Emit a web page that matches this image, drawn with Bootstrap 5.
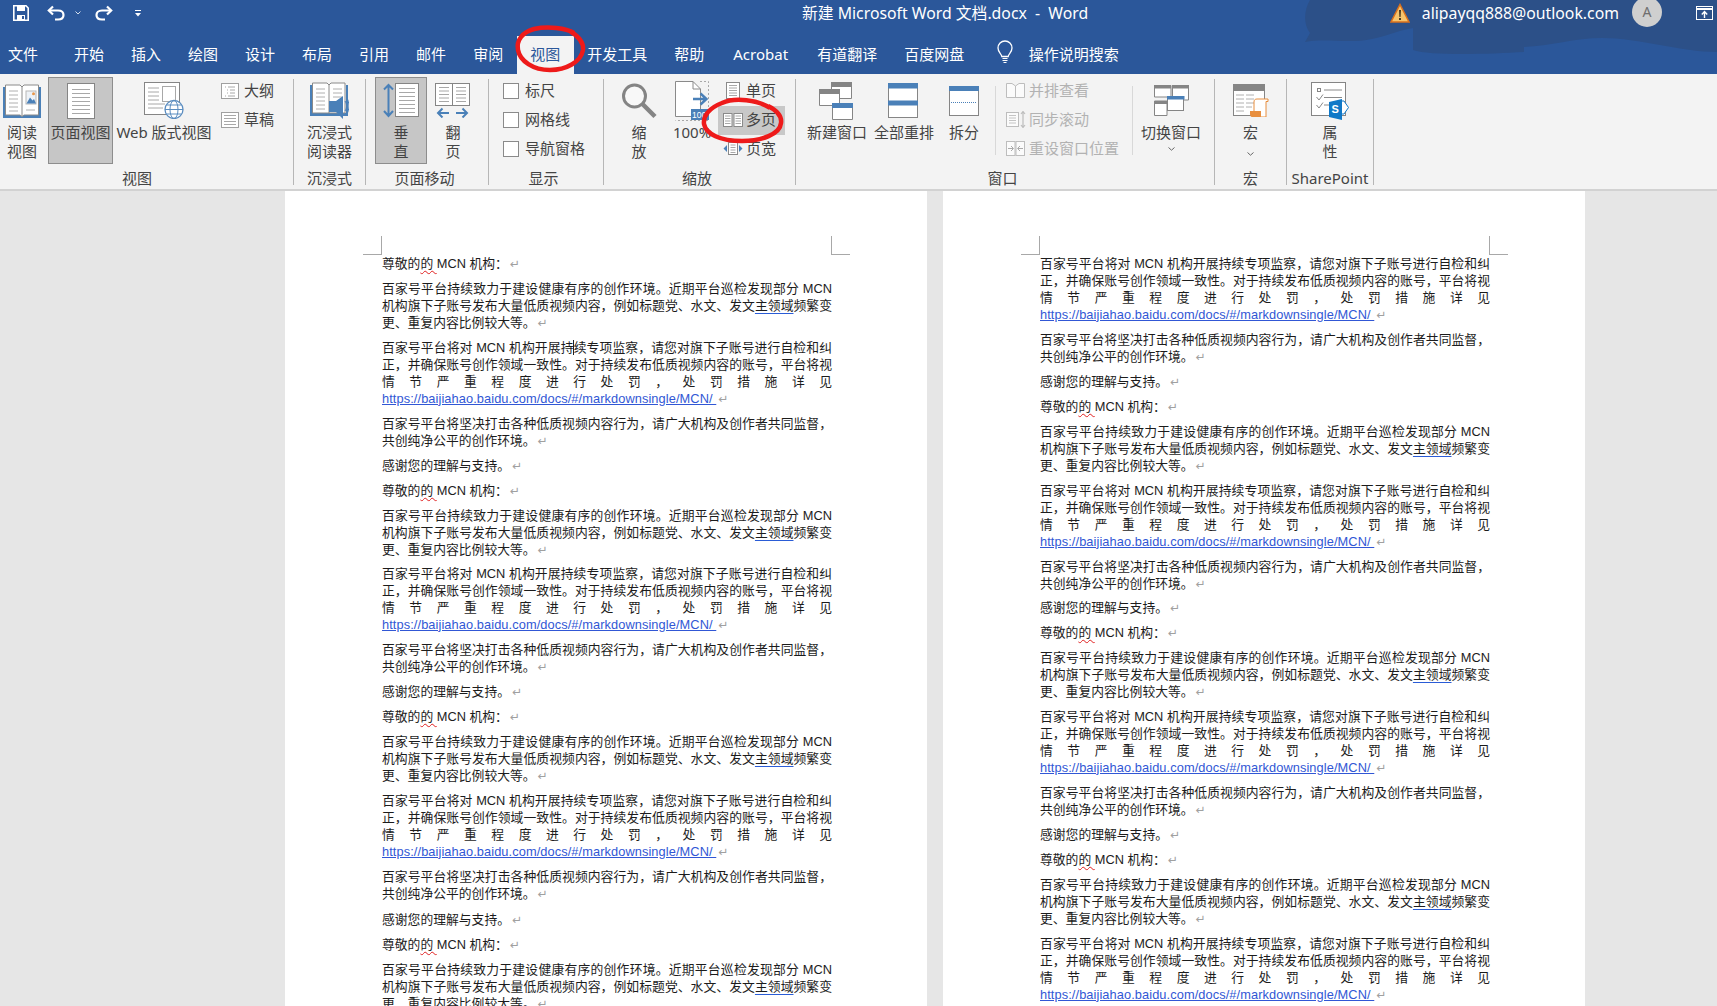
<!DOCTYPE html>
<html lang="zh-CN">
<head>
<meta charset="utf-8">
<title>新建 Microsoft Word 文档.docx - Word</title>
<link href="https://cdn.jsdelivr.net/npm/bootstrap@5.3.0/dist/css/bootstrap.min.css" rel="stylesheet">
<style>
html,body{height:100%;margin:0;overflow:hidden}
body{font-family:"Noto Sans","Noto Sans CJK SC",sans-serif;background:#e6e6e6;color:#444;position:relative}
.w-top{background:#2b579a;color:#fff;height:74px;position:relative;overflow:hidden}
.w-cloud{position:absolute;right:0;top:0;width:467px;height:74px}
.w-titlerow{height:36px;position:relative;font-size:15.8px}
.w-qat{width:802px;padding-left:13px;height:26px}
.w-qat svg{display:block}
.w-title{line-height:26px;white-space:pre}
.w-acct{margin-left:auto;height:26px}
.w-email{font-size:15.8px;line-height:23px;margin-left:12px;margin-right:13px}
.w-avatar{width:30px;height:30px;border-radius:50%;background:#cfcfcf;color:#6e6e6e;font-size:14px;line-height:30px;text-align:center;margin-top:-3px;margin-right:34px;flex:none}
.w-tabs{height:38px;position:relative;font-size:15px}
.w-tab{padding:0 13.5px;line-height:36px;height:38px;color:#fff;white-space:nowrap}
.w-tab.first{padding:0 22.5px 0 8px}
.w-tab.acro{width:86px;padding:0;text-align:center}
.w-tab.now{background:#f3f3f3;color:#2b579a}
.w-tell{margin-left:17px}
.w-ribbon{height:117px;background:#f3f3f3;border-bottom:2px solid #d2d2d2;font-size:15px;line-height:19px;color:#444}
.rg{flex:none;padding-top:3px;height:115px;display:flex;flex-direction:column}
.rg-body{height:90px;display:flex;align-items:flex-start}
.rg-name{text-align:center;line-height:22px;height:22px;font-size:15px;white-space:nowrap}
.rsep{flex:none;width:1px;background:#b6b6b6;margin:5px 0 4px}
.rsep-soft{flex:none;width:1px;height:69px;background:#d8d8d8;margin-top:9px}
.rb{flex:none;height:87px;text-align:center;border:1px solid transparent;white-space:nowrap}
.rb.on{background:#c6c6c6;border-color:#8d8d8d}
.rb-ico{height:45px;display:flex;align-items:center;justify-content:center}
.rb-ico svg{display:block;flex:none}
.rs-col{flex:none}
.rs{height:29px;padding-bottom:2px;display:flex;align-items:center;white-space:nowrap}
.rs.hot{background:#c8c8c8}
.rs.off{color:#b2b2b2}
.rs svg{display:block;flex:none}
.rs-box{flex:none;width:16px;height:16px;margin:0 6px 0 0;border-radius:0!important;border:1px solid #8a8a8a;background-color:#fff}
.rb-chev{display:block;margin:5px auto 0}
.gw-read{width:293px}.gw-imm,.gw-mac{width:71px}.gw-move{width:122px}.gw-show{width:114px;padding-left:14px}.gw-zoom{width:191px}.gw-win{width:418px}.gw-sp{width:86px}
.p-r19{padding-right:19px}.p-r5{padding-right:5px}
.bw-44{width:44px}.bw-65{width:65px}.bw-98{width:98px}.bw-52{width:52px}.bw-40{width:40px}.bw-48{width:48px}.bw-60{width:60px}.bw-32{width:32px}.bw-62{width:62px}
.ml-2px{margin-left:2px}.ml-4px{margin-left:4px}.ml-8px{margin-left:8px}.ml-9px{margin-left:9px}.ml-15px{margin-left:15px}.ml-8a{margin-left:7px}.ml-15a{margin-left:15px}
.w-doc{height:815px;overflow:hidden;padding-left:285px;gap:16px}
.w-page{flex:none;width:642px;height:900px;background:#fff;position:relative;padding:63.5px 95px 0 97px;font-family:"Liberation Sans","Noto Sans CJK SC",sans-serif;font-size:12.8px;line-height:17px;color:#1c1c1c}
.crop{position:absolute;top:45px;width:19px;height:19px;border-bottom:1px solid #a8a8a8}
.crop.l{left:78px;border-right:1px solid #a8a8a8}
.crop.r{right:77px;border-left:1px solid #a8a8a8}
.doc-para{margin:0 0 8px}
.doc-para.tight{margin-bottom:7px}
.doc-para.loose{margin-bottom:9px}
.doc-line{display:block;height:17px;white-space:nowrap}
.doc-line.fit{text-align:justify;text-align-last:justify}
.doc-wavy{text-decoration:underline wavy #e02020 1px;text-underline-offset:2px}
.doc-blue{text-decoration:underline #2a5cd6 1px;text-underline-offset:3px}
.doc-caret{border-left:1px solid #222;margin-left:-1px}
.doc-link{color:#3157d5;letter-spacing:.09px}
.doc-mark{color:#a0a0a0;font-family:"DejaVu Sans",sans-serif;font-size:12px;margin-left:2px}
.w-marks{position:absolute;left:0;top:0;pointer-events:none}
</style>
</head>
<body>
<header class="w-top">
<svg class="w-cloud" viewBox="0 0 467 74" aria-hidden="true"><path d="M60 0C54 10 53 24 60 33L55 42C75 38 100 44 122 39C140 35 150 30 163 28L163 50C180 56 240 54 274 52L274 47C300 46 325 38 352 38C390 38 430 52 467 52V0Z" fill="#2c5088"/></svg>
<div class="w-titlerow d-flex">
<div class="w-qat d-flex align-items-center">
<svg width="16" height="16" viewBox="0 0 16 16"><path d="M.8.8H13L15.2 3V15.2H.8Z" fill="none" stroke="#fff" stroke-width="1.6"/><path d="M4 1h8v5H4zM4 10h8v5H4z" fill="#fff"/><path d="M9 11h2v3H9z" fill="#2b579a"/></svg>
<svg style="margin-left:18px" width="18" height="16" viewBox="0 0 18 16"><path d="M6 1.5 1.8 5.5 6 9.5" fill="none" stroke="#fff" stroke-width="2.2"/><path d="M2 5.5H11C14.5 5.5 16.5 7.5 16.5 10S14.5 14.5 11 14.5H8" fill="none" stroke="#fff" stroke-width="2.2"/></svg>
<svg style="margin-left:10px" width="6" height="4" viewBox="0 0 6 4"><path d="M.5.5 3 3 5.500.5" fill="none" stroke="#d5deeb" stroke-width="1"/></svg>
<svg style="margin-left:14px" width="18" height="16" viewBox="0 0 18 16"><path d="M12 1.500 16.200 5.500 12 9.500" fill="none" stroke="#fff" stroke-width="2.200"/><path d="M16 5.500H7C3.500 5.500 1.500 7.500 1.500 10S3.500 14.500 7 14.500H10" fill="none" stroke="#fff" stroke-width="2.200"/></svg>
<svg style="margin-left:22px" width="6" height="7" viewBox="0 0 6 7"><path d="M0 .5H6" stroke="#fff"/><path d="M0 3H6L3 6.500Z" fill="#fff"/></svg>
</div>
<div class="w-title">新建 Microsoft Word 文档.docx  -  Word</div>
<div class="w-acct d-flex align-items-center">
<svg width="20" height="20" viewBox="0 0 20 20"><path d="M10 1.500 19 19H1Z" fill="#f7c46c" stroke="#d9701c" stroke-width="1.500"/><path d="M9 7h2l-.4 7H9.400ZM9 15h2v2H9Z" fill="#4a3a20"/></svg>
<div class="w-email">alipayqq888@outlook.com</div>
<div class="w-avatar">A</div>
<svg class="me-1" width="17" height="14" viewBox="0 0 17 14"><rect x=".5" y=".5" width="16" height="13" fill="none" stroke="#fff"/><path d="M.5 3H16.500" stroke="#fff" stroke-width="2"/><path d="M8.500 12V6M5.800 8.500 8.500 5.500 11.200 8.500" fill="none" stroke="#fff" stroke-width="1.400"/></svg>
</div>
</div>
<nav class="w-tabs d-flex">
<div class="w-tab first">文件</div><div class="w-tab">开始</div><div class="w-tab">插入</div><div class="w-tab">绘图</div><div class="w-tab">设计</div><div class="w-tab">布局</div><div class="w-tab">引用</div><div class="w-tab">邮件</div><div class="w-tab">审阅</div><div class="w-tab now">视图</div><div class="w-tab">开发工具</div><div class="w-tab">帮助</div><div class="w-tab acro">Acrobat</div><div class="w-tab">有道翻译</div><div class="w-tab">百度网盘</div>
<div class="w-tell d-flex align-items-start">
<svg class="mt-1" style="margin-right:14px;margin-left:0" width="20" height="24" viewBox="0 0 20 24"><path d="M6.800 16.500C6.500 13.500 3 12.500 3 8A7 7 0 0 1 17 8C17 12.500 13.500 13.500 13.200 16.500Z" fill="none" stroke="#fff" stroke-width="1.300"/><path d="M7.500 18.500H12.500M7.500 20.500H12.500M8.500 22.500H11.500" stroke="#fff" stroke-width="1.200"/></svg>
<div class="w-tab p-0">操作说明搜索</div>
</div>
</nav>
</header>

<section class="w-ribbon d-flex">
<div class="rg gw-read">
<div class="rg-body">
<div class="rb bw-44"><div class="rb-ico"><svg width="38" height="34" viewBox="0 0 38 34"><path d="M0 3H3V31H35V3H38V34H0Z" fill="#4a80b8"/><path d="M2.500 1H17L19 3 21 1H35.500V31H21L19 32.500 17 31H2.500Z" fill="#fff" stroke="#8a8a8a"/><path d="M19 3V32" stroke="#8a8a8a"/><path d="M6 7H15M6 11H15M6 15H15M6 19H15M6 23H15M6 27H15M23 26H32" stroke="#b0b0b0"/><rect x="23" y="7" width="10" height="13" fill="#eef2f7" stroke="#b8b8b8"/><circle cx="30.500" cy="9.800" r="1.500" fill="#e8974b"/><path d="M23.500 19.500 27 13.500 29.500 16.500 31 15 33 19.500Z" fill="#4a80b8"/></svg></div><div>阅读<br>视图</div></div>
<div class="rb bw-65 on ml-4px"><div class="rb-ico"><svg width="28" height="36" viewBox="0 0 28 36"><rect x=".5" y=".5" width="27" height="35" fill="#fff" stroke="#858585"/><path d="M5 6.500H23M5 10.500H23M5 14.500H23M5 18.500H23M5 22.500H23M5 26.500H23M5 30.500H23" stroke="#a8a8a8"/></svg></div><div>页面视图</div></div>
<div class="rb bw-98 ml-2px"><div class="rb-ico"><svg width="40" height="37" viewBox="0 0 40 37"><rect x=".5" y=".5" width="35" height="32" fill="#fff" stroke="#858585"/><path d="M4 6H15M4 10H15M4 14H15M4 18H15M4 22H21M4 26H19" stroke="#a8a8a8"/><rect x="18.500" y="4.500" width="13" height="15" fill="#fff" stroke="#a8a8a8"/><circle cx="30" cy="27.500" r="9" fill="#fff" stroke="#5b8dc0" stroke-width="1.300"/><ellipse cx="30" cy="27.500" rx="4" ry="9" fill="none" stroke="#5b8dc0"/><path d="M21 27.500H39M22.500 23H37.500M22.500 32H37.500" stroke="#5b8dc0"/></svg></div><div>Web 版式视图</div></div>
<div class="rs-col ml-8px">
<div class="rs"><svg style="margin-right:5px" width="18" height="16" viewBox="0 0 18 16"><rect x=".5" y=".5" width="17" height="15" fill="#fff" stroke="#a0a0a0"/><path d="M4 4H5M7 4H14M6 7H7M9 7H14M6 10H7M9 10H14M4 13H5M7 13H14" stroke="#a8a8a8"/></svg>大纲</div>
<div class="rs"><svg style="margin-right:5px" width="18" height="16" viewBox="0 0 18 16"><rect x=".5" y=".5" width="17" height="15" fill="#fff" stroke="#a0a0a0"/><path d="M3 3.500H15M3 6.500H15M3 9.500H15M3 12.500H15" stroke="#a8a8a8"/></svg>草稿</div>
</div>
</div>
<div class="rg-name p-r19">视图</div>
</div>
<div class="rsep"></div>
<div class="rg gw-imm">
<div class="rg-body justify-content-center">
<div class="rb bw-52"><div class="rb-ico"><svg width="39" height="37" viewBox="0 0 39 37"><path d="M0 3H3V31H36V3H38V34H0Z" fill="#4a80b8"/><path d="M2.500 1H17L19 3 21 1H35V31H2.500Z" fill="#fff" stroke="#8a8a8a"/><path d="M19 3V31" stroke="#8a8a8a"/><path d="M6 7H15M6 11H15M6 15H15M6 19H15M6 23H15M6 27H15M23 7H32M23 11H32M23 15H32" stroke="#b0b0b0"/><path d="M19 19H26L33 14V37L26 30H19Z" fill="#4a80b8"/><path d="M35 19C37 22 37 26 35 29M37 16C39.500 21 39.500 27 37 32" fill="none" stroke="#4a80b8"/></svg></div><div>沉浸式<br>阅读器</div></div>
</div>
<div class="rg-name">沉浸式</div>
</div>
<div class="rsep"></div>
<div class="rg gw-move">
<div class="rg-body" style="padding-left:9px">
<div class="rb bw-52 on"><div class="rb-ico"><svg width="36" height="35" viewBox="0 0 36 35"><rect x="12.500" y=".5" width="23" height="33" fill="#fff" stroke="#858585"/><path d="M16 5.500H32M16 9.500H32M16 13.500H32M16 17.500H32M16 21.500H32M16 25.500H32M16 29.500H32" stroke="#a8a8a8"/><path d="M5.500 2V32M1 6.500 5.500 2 10 6.500M1 28 5.500 33 10 28" fill="none" stroke="#4a80b8" stroke-width="2"/></svg></div><div>垂<br>直</div></div>
<div class="rb bw-52"><div class="rb-ico"><svg width="36" height="35" viewBox="0 0 36 35"><rect x=".5" y=".5" width="17" height="22" fill="#fff" stroke="#858585"/><rect x="17.500" y=".5" width="17" height="22" fill="#fff" stroke="#858585"/><path d="M4 4.500H14M4 8H14M4 11.500H14M4 15H14M4 18.500H14M21 4.500H31M21 8H31M21 11.500H31M21 15H31M21 18.500H31" stroke="#a8a8a8"/><path d="M3 30H14M7.500 25.500 3 30 7.500 34.500M21 30H32M27.500 25.500 32 30 27.500 34.500" fill="none" stroke="#4a80b8" stroke-width="2"/></svg></div><div>翻<br>页</div></div>
</div>
<div class="rg-name p-r5">页面移动</div>
</div>
<div class="rsep"></div>
<div class="rg gw-show">
<div class="rg-body">
<div class="rs-col">
<div class="rs"><input class="form-check-input rs-box" type="checkbox" aria-label="标尺">标尺</div>
<div class="rs"><input class="form-check-input rs-box" type="checkbox" aria-label="网格线">网格线</div>
<div class="rs"><input class="form-check-input rs-box" type="checkbox" aria-label="导航窗格">导航窗格</div>
</div>
</div>
<div class="rg-name p-r19">显示</div>
</div>
<div class="rsep"></div>
<div class="rg gw-zoom">
<div class="rg-body" style="padding-left:15px">
<div class="rb bw-40"><div class="rb-ico"><svg width="36" height="36" viewBox="0 0 36 36"><circle cx="13.500" cy="13" r="11" fill="#f8f8f8" stroke="#848484" stroke-width="3"/><path d="M21.500 21 34 33.500" stroke="#848484" stroke-width="4.500"/></svg></div><div>缩<br>放</div></div>
<div class="rb bw-48 ml-9px"><div class="rb-ico"><svg width="34" height="40" viewBox="0 0 34 40"><path d="M25 .5H33.500V39.500H.5" fill="none" stroke="#a8a8a8" stroke-dasharray="2 2"/><path d="M.5 .5H18L25.500 8V35.500H.5Z" fill="#fff" stroke="#8a8a8a"/><path d="M18 .5V8H25.500" fill="none" stroke="#8a8a8a"/><path d="M18 18H31M25.500 12.500 31.500 18 25.500 23.500" fill="none" stroke="#4a80b8" stroke-width="2.400"/><rect x="16" y="28" width="18" height="11" fill="#4a80b8"/><text x="17" y="37" fill="#fff" font-size="8.500" font-family="Liberation Sans">100</text></svg></div><div>100%</div></div>
<div class="rs-col ml-2px" style="width:67px">
<div class="rs"><svg style="margin:0 6px 0 8px" width="14" height="17" viewBox="0 0 14 17"><rect x=".5" y=".5" width="13" height="16" fill="#fff" stroke="#8a8a8a"/><path d="M3 3.500H11M3 6H11M3 8.500H11M3 11H11M3 13.500H11" stroke="#a8a8a8"/></svg>单页</div>
<div class="rs hot"><svg style="margin:0 3px 0 5px" width="20" height="14" viewBox="0 0 20 14"><rect x=".5" y=".5" width="8.500" height="13" fill="#fff" stroke="#8a8a8a"/><rect x="11" y=".5" width="8.500" height="13" fill="#fff" stroke="#8a8a8a"/><path d="M2 3H7.500M2 5.500H7.500M2 8H7.500M2 10.500H7.500M12.500 3H18M12.500 5.500H18M12.500 8H18M12.500 10.500H18" stroke="#a8a8a8"/></svg>多页</div>
<div class="rs"><svg style="margin:0 3px 0 5px" width="20" height="13" viewBox="0 0 20 13"><rect x="5.500" y=".5" width="9" height="12" fill="#fff" stroke="#8a8a8a"/><path d="M7.500 3H12.500M7.500 5.500H12.500M7.500 8H12.500M7.500 10.500H12.500" stroke="#a8a8a8"/><path d="M4 3 .5 6.500 4 10ZM16 3 19.500 6.500 16 10Z" fill="#4a80b8"/></svg>页宽</div>
</div>
</div>
<div class="rg-name p-r5">缩放</div>
</div>
<div class="rsep"></div>
<div class="rg gw-win">
<div class="rg-body" style="padding-left:10px">
<div class="rb bw-60"><div class="rb-ico"><svg width="34" height="38" viewBox="0 0 34 38"><path d="M12.500.5H32.500V16.500H12.500Z" fill="#fff" stroke="#858585"/><rect x="12" width="21" height="5" fill="#858585"/><path d="M.5 7.500H20.500V23.500H.5Z" fill="#fff" stroke="#858585"/><rect width="21" height="5" y="7" fill="#858585"/><path d="M13.500 21.500H33.500V37.500H13.500Z" fill="#fff" stroke="#858585"/><rect x="13" y="21" width="21" height="5" fill="#4a80b8"/></svg></div><div>新建窗口</div></div>
<div class="rb bw-60 ml-8a"><div class="rb-ico"><svg width="30" height="35" viewBox="0 0 30 35"><rect x=".5" y=".5" width="29" height="34" fill="#fff" stroke="#858585"/><rect width="30" height="5.500" fill="#4a80b8"/><rect y="17.500" width="30" height="5" fill="#4a80b8"/></svg></div><div>全部重排</div></div>
<div class="rb bw-32 ml-15a"><div class="rb-ico"><svg width="30" height="30" viewBox="0 0 30 30"><rect x=".5" y=".5" width="29" height="29" fill="#fff" stroke="#858585"/><rect width="30" height="5" fill="#4a80b8"/><path d="M2 16.500H28" stroke="#4a80b8" stroke-dasharray="1 1"/></svg></div><div>拆分</div></div>
<div class="rsep-soft ml-15px"></div>
<div class="rs-col ml-9px" style="width:127px">
<div class="rs off"><svg style="margin:0 4px 0 1px" width="19" height="15" viewBox="0 0 19 15"><path d="M.5 .5H6L9.500 3 13 .5H18.500V14.500H.5Z" fill="#fbfbfb" stroke="#bdbdbd"/><path d="M9.500 3V14.500" stroke="#bdbdbd"/></svg>并排查看</div>
<div class="rs off"><svg style="margin:0 3px 0 1px" width="20" height="17" viewBox="0 0 20 17"><rect x=".5" y="1.500" width="12" height="14" fill="#fbfbfb" stroke="#bdbdbd"/><path d="M3 4.500H10M3 7H10M3 9.500H10M3 12H10" stroke="#c4c4c4"/><path d="M17 .5V16.500M15 3 17 .5 19 3M15 14 17 16.500 19 14" fill="none" stroke="#bdbdbd" stroke-width="1.200"/></svg>同步滚动</div>
<div class="rs off"><svg style="margin:0 4px 0 1px" width="19" height="15" viewBox="0 0 19 15"><rect x=".5" y=".5" width="8.500" height="14" fill="#fbfbfb" stroke="#bdbdbd"/><rect x="10" y=".5" width="8.500" height="14" fill="#fbfbfb" stroke="#bdbdbd"/><path d="M2 7.500H7M5 5 7.500 7.500 5 10M17 7.500H12M14 5 11.500 7.500 14 10" fill="none" stroke="#aaa"/></svg>重设窗口位置</div>
</div>
<div class="rsep-soft"></div>
<div class="rb bw-62 ml-8a"><div class="rb-ico"><svg width="35" height="31" viewBox="0 0 35 31"><path d="M.5 .5H17V12H.5ZM18.500 .5H34.500V15H18.500ZM.5 16H13V30.500H.5Z" fill="#fff" stroke="#858585"/><rect width="17" height="3.500" fill="#858585"/><rect x="18" width="17" height="3.500" fill="#858585"/><rect y="16" width="13" height="3" fill="#858585"/><rect x="13.500" y="11.500" width="16" height="14" fill="#fff" stroke="#858585"/><rect x="13" y="11" width="17.500" height="3.500" fill="#4a80b8"/></svg></div><div>切换窗口</div><svg class="rb-chev" width="7" height="4" viewBox="0 0 7 4"><path d="M.5.5 3.500 3.200 6.500.5" fill="none" stroke="#666"/></svg></div>
</div>
<div class="rg-name p-r5">窗口</div>
</div>
<div class="rsep"></div>
<div class="rg gw-mac">
<div class="rg-body justify-content-center">
<div class="rb bw-52"><div class="rb-ico"><svg width="36" height="33" viewBox="0 0 36 33"><rect x=".5" y=".5" width="31" height="31" fill="#fff" stroke="#858585"/><rect width="32" height="7" fill="#858585"/><path d="M3 11H11M13 11H21M3 15H11M13 15H21M3 19H11M13 19H21M3 23H11M13 23H19M3 27H11" stroke="#b0b0b0"/><path d="M21 18C21 16 22 15 24 15H35V17.500H33V33H22V29H21Z" fill="#fff" stroke="#e88e3e"/><path d="M17 27H28V33H19C17.500 33 17 31.500 17 30Z" fill="#e88e3e"/></svg></div><div>宏</div><svg class="rb-chev" style="margin-top:10px" width="7" height="4" viewBox="0 0 7 4"><path d="M.5.5 3.500 3.200 6.500.5" fill="none" stroke="#666"/></svg></div>
</div>
<div class="rg-name">宏</div>
</div>
<div class="rsep"></div>
<div class="rg gw-sp">
<div class="rg-body justify-content-center">
<div class="rb bw-52"><div class="rb-ico"><svg width="38" height="38" viewBox="0 0 38 38"><rect x=".5" y=".5" width="34" height="33" fill="#fff" stroke="#858585"/><rect x="6.500" y="6.500" width="3" height="3" fill="#fff" stroke="#858585"/><path d="M13 8H31M13 15.500H31M13 23H20" stroke="#8a8a8a"/><path d="M5.500 15 8 18 12 12.500M5.500 23 8 26 12 20.500" fill="none" stroke="#8a8a8a"/><path d="M18 20 31 17V38L18 35Z" fill="#0f78c7"/><path d="M31 19H33L37.500 25.500 33 32H31" fill="#fff" stroke="#0f78c7"/><text x="20.500" y="31" fill="#fff" font-size="11" font-weight="700" font-family="Liberation Sans">S</text></svg></div><div>属<br>性</div></div>
</div>
<div class="rg-name">SharePoint</div>
</div>
<div class="rsep"></div>
</section>

<main class="w-doc d-flex">
<article class="w-page">
<div class="crop l"></div><div class="crop r"></div>
<p class="doc-para"><span class="doc-line">尊敬的<span class="doc-wavy">的 </span>MCN 机构：<span class="doc-mark">↵</span></span></p>
<p class="doc-para"><span class="doc-line fit">百家号平台持续致力于建设健康有序的创作环境。近期平台巡检发现部分 MCN</span><span class="doc-line fit">机构旗下子账号发布大量低质视频内容，例如标题党、水文、发文<span class="doc-blue">主领域</span>频繁变</span><span class="doc-line">更、重复内容比例较大等。<span class="doc-mark">↵</span></span></p>
<p class="doc-para"><span class="doc-line fit">百家号平台将对 MCN 机构开展持<span class="doc-caret">续</span>专项监察，请您对旗下子账号进行自检和纠</span><span class="doc-line fit">正，并确保账号创作领域一致性。对于持续发布低质视频内容的账号，平台将视</span><span class="doc-line fit">情节严重程度进行处罚，处罚措施详见</span><span class="doc-line"><a class="doc-link" href="#">https://baijiahao.baidu.com/docs/#/markdownsingle/MCN/ </a><span class="doc-mark">↵</span></span></p>
<p class="doc-para"><span class="doc-line fit">百家号平台将坚决打击各种低质视频内容行为，请广大机构及创作者共同监督，</span><span class="doc-line">共创纯净公平的创作环境。<span class="doc-mark">↵</span></span></p>
<p class="doc-para"><span class="doc-line">感谢您的理解与支持。<span class="doc-mark">↵</span></span></p>

<p class="doc-para"><span class="doc-line">尊敬的<span class="doc-wavy">的 </span>MCN 机构：<span class="doc-mark">↵</span></span></p>
<p class="doc-para tight"><span class="doc-line fit">百家号平台持续致力于建设健康有序的创作环境。近期平台巡检发现部分 MCN</span><span class="doc-line fit">机构旗下子账号发布大量低质视频内容，例如标题党、水文、发文<span class="doc-blue">主领域</span>频繁变</span><span class="doc-line">更、重复内容比例较大等。<span class="doc-mark">↵</span></span></p>
<p class="doc-para"><span class="doc-line fit">百家号平台将对 MCN 机构开展持续专项监察，请您对旗下子账号进行自检和纠</span><span class="doc-line fit">正，并确保账号创作领域一致性。对于持续发布低质视频内容的账号，平台将视</span><span class="doc-line fit">情节严重程度进行处罚，处罚措施详见</span><span class="doc-line"><a class="doc-link" href="#">https://baijiahao.baidu.com/docs/#/markdownsingle/MCN/ </a><span class="doc-mark">↵</span></span></p>
<p class="doc-para"><span class="doc-line fit">百家号平台将坚决打击各种低质视频内容行为，请广大机构及创作者共同监督，</span><span class="doc-line">共创纯净公平的创作环境。<span class="doc-mark">↵</span></span></p>
<p class="doc-para"><span class="doc-line">感谢您的理解与支持。<span class="doc-mark">↵</span></span></p>

<p class="doc-para"><span class="doc-line">尊敬的<span class="doc-wavy">的 </span>MCN 机构：<span class="doc-mark">↵</span></span></p>
<p class="doc-para"><span class="doc-line fit">百家号平台持续致力于建设健康有序的创作环境。近期平台巡检发现部分 MCN</span><span class="doc-line fit">机构旗下子账号发布大量低质视频内容，例如标题党、水文、发文<span class="doc-blue">主领域</span>频繁变</span><span class="doc-line">更、重复内容比例较大等。<span class="doc-mark">↵</span></span></p>
<p class="doc-para"><span class="doc-line fit">百家号平台将对 MCN 机构开展持续专项监察，请您对旗下子账号进行自检和纠</span><span class="doc-line fit">正，并确保账号创作领域一致性。对于持续发布低质视频内容的账号，平台将视</span><span class="doc-line fit">情节严重程度进行处罚，处罚措施详见</span><span class="doc-line"><a class="doc-link" href="#">https://baijiahao.baidu.com/docs/#/markdownsingle/MCN/ </a><span class="doc-mark">↵</span></span></p>
<p class="doc-para loose"><span class="doc-line fit">百家号平台将坚决打击各种低质视频内容行为，请广大机构及创作者共同监督，</span><span class="doc-line">共创纯净公平的创作环境。<span class="doc-mark">↵</span></span></p>
<p class="doc-para"><span class="doc-line">感谢您的理解与支持。<span class="doc-mark">↵</span></span></p>

<p class="doc-para"><span class="doc-line">尊敬的<span class="doc-wavy">的 </span>MCN 机构：<span class="doc-mark">↵</span></span></p>
<p class="doc-para"><span class="doc-line fit">百家号平台持续致力于建设健康有序的创作环境。近期平台巡检发现部分 MCN</span><span class="doc-line fit">机构旗下子账号发布大量低质视频内容，例如标题党、水文、发文<span class="doc-blue">主领域</span>频繁变</span><span class="doc-line">更、重复内容比例较大等。<span class="doc-mark">↵</span></span></p>
</article>
<article class="w-page">
<div class="crop l"></div><div class="crop r"></div>
<p class="doc-para"><span class="doc-line fit">百家号平台将对 MCN 机构开展持续专项监察，请您对旗下子账号进行自检和纠</span><span class="doc-line fit">正，并确保账号创作领域一致性。对于持续发布低质视频内容的账号，平台将视</span><span class="doc-line fit">情节严重程度进行处罚，处罚措施详见</span><span class="doc-line"><a class="doc-link" href="#">https://baijiahao.baidu.com/docs/#/markdownsingle/MCN/ </a><span class="doc-mark">↵</span></span></p>
<p class="doc-para"><span class="doc-line fit">百家号平台将坚决打击各种低质视频内容行为，请广大机构及创作者共同监督，</span><span class="doc-line">共创纯净公平的创作环境。<span class="doc-mark">↵</span></span></p>
<p class="doc-para"><span class="doc-line">感谢您的理解与支持。<span class="doc-mark">↵</span></span></p>

<p class="doc-para"><span class="doc-line">尊敬的<span class="doc-wavy">的 </span>MCN 机构：<span class="doc-mark">↵</span></span></p>
<p class="doc-para"><span class="doc-line fit">百家号平台持续致力于建设健康有序的创作环境。近期平台巡检发现部分 MCN</span><span class="doc-line fit">机构旗下子账号发布大量低质视频内容，例如标题党、水文、发文<span class="doc-blue">主领域</span>频繁变</span><span class="doc-line">更、重复内容比例较大等。<span class="doc-mark">↵</span></span></p>
<p class="doc-para"><span class="doc-line fit">百家号平台将对 MCN 机构开展持续专项监察，请您对旗下子账号进行自检和纠</span><span class="doc-line fit">正，并确保账号创作领域一致性。对于持续发布低质视频内容的账号，平台将视</span><span class="doc-line fit">情节严重程度进行处罚，处罚措施详见</span><span class="doc-line"><a class="doc-link" href="#">https://baijiahao.baidu.com/docs/#/markdownsingle/MCN/ </a><span class="doc-mark">↵</span></span></p>
<p class="doc-para tight"><span class="doc-line fit">百家号平台将坚决打击各种低质视频内容行为，请广大机构及创作者共同监督，</span><span class="doc-line">共创纯净公平的创作环境。<span class="doc-mark">↵</span></span></p>
<p class="doc-para"><span class="doc-line">感谢您的理解与支持。<span class="doc-mark">↵</span></span></p>

<p class="doc-para"><span class="doc-line">尊敬的<span class="doc-wavy">的 </span>MCN 机构：<span class="doc-mark">↵</span></span></p>
<p class="doc-para"><span class="doc-line fit">百家号平台持续致力于建设健康有序的创作环境。近期平台巡检发现部分 MCN</span><span class="doc-line fit">机构旗下子账号发布大量低质视频内容，例如标题党、水文、发文<span class="doc-blue">主领域</span>频繁变</span><span class="doc-line">更、重复内容比例较大等。<span class="doc-mark">↵</span></span></p>
<p class="doc-para"><span class="doc-line fit">百家号平台将对 MCN 机构开展持续专项监察，请您对旗下子账号进行自检和纠</span><span class="doc-line fit">正，并确保账号创作领域一致性。对于持续发布低质视频内容的账号，平台将视</span><span class="doc-line fit">情节严重程度进行处罚，处罚措施详见</span><span class="doc-line"><a class="doc-link" href="#">https://baijiahao.baidu.com/docs/#/markdownsingle/MCN/ </a><span class="doc-mark">↵</span></span></p>
<p class="doc-para"><span class="doc-line fit">百家号平台将坚决打击各种低质视频内容行为，请广大机构及创作者共同监督，</span><span class="doc-line">共创纯净公平的创作环境。<span class="doc-mark">↵</span></span></p>
<p class="doc-para"><span class="doc-line">感谢您的理解与支持。<span class="doc-mark">↵</span></span></p>

<p class="doc-para"><span class="doc-line">尊敬的<span class="doc-wavy">的 </span>MCN 机构：<span class="doc-mark">↵</span></span></p>
<p class="doc-para"><span class="doc-line fit">百家号平台持续致力于建设健康有序的创作环境。近期平台巡检发现部分 MCN</span><span class="doc-line fit">机构旗下子账号发布大量低质视频内容，例如标题党、水文、发文<span class="doc-blue">主领域</span>频繁变</span><span class="doc-line">更、重复内容比例较大等。<span class="doc-mark">↵</span></span></p>
<p class="doc-para"><span class="doc-line fit">百家号平台将对 MCN 机构开展持续专项监察，请您对旗下子账号进行自检和纠</span><span class="doc-line fit">正，并确保账号创作领域一致性。对于持续发布低质视频内容的账号，平台将视</span><span class="doc-line fit">情节严重程度进行处罚，处罚措施详见</span><span class="doc-line"><a class="doc-link" href="#">https://baijiahao.baidu.com/docs/#/markdownsingle/MCN/ </a><span class="doc-mark">↵</span></span></p>
</article>
</main>
<svg class="w-marks" width="1717" height="200" viewBox="0 0 1717 200" aria-hidden="true"><g fill="none" stroke="#ee1a1a" stroke-width="4.500"><path d="M574 33C566 28 548 26 534 29C523 32 516 40 518 50C520 61 533 70 550 70C566 70 581 62 583 50C584 42 578 36 570 31"/><path d="M770 108C758 100 735 97 722 103C709 108 703 116 704 124C706 134 720 141 742 141C762 141 780 134 781 123C782 116 776 110 768 106"/></g></svg>
<script src="https://cdn.jsdelivr.net/npm/bootstrap@5.3.0/dist/js/bootstrap.bundle.min.js"></script>
</body>
</html>
